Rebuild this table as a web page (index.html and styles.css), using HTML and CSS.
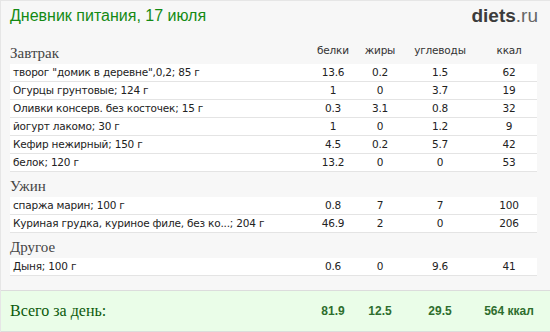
FILE: index.html
```html
<!DOCTYPE html>
<html lang="ru">
<head>
<meta charset="utf-8">
<link rel="stylesheet" href="styles.css">
</head>
<body>
<div class="page">
  <header class="top">
    <h1 class="title">Дневник питания, 17 июля</h1>
    <div class="logo"><b>diets</b>.ru</div>
  </header>

  <section class="meal">
    <div class="meal-head">
      <h2 class="meal-name">Завтрак</h2>
      <span class="c c1">белки</span><span class="c c2">жиры</span><span class="c c3">углеводы</span><span class="c c4">ккал</span>
    </div>
    <div class="row"><span class="name">творог "домик в деревне",0,2; 85 г</span><span class="c c1">13.6</span><span class="c c2">0.2</span><span class="c c3">1.5</span><span class="c c4">62</span></div>
    <div class="row"><span class="name">Огурцы грунтовые; 124 г</span><span class="c c1">1</span><span class="c c2">0</span><span class="c c3">3.7</span><span class="c c4">19</span></div>
    <div class="row"><span class="name">Оливки консерв. без косточек; 15 г</span><span class="c c1">0.3</span><span class="c c2">3.1</span><span class="c c3">0.8</span><span class="c c4">32</span></div>
    <div class="row"><span class="name">йогурт лакомо; 30 г</span><span class="c c1">1</span><span class="c c2">0</span><span class="c c3">1.2</span><span class="c c4">9</span></div>
    <div class="row"><span class="name">Кефир нежирный; 150 г</span><span class="c c1">4.5</span><span class="c c2">0.2</span><span class="c c3">5.7</span><span class="c c4">42</span></div>
    <div class="row"><span class="name">белок; 120 г</span><span class="c c1">13.2</span><span class="c c2">0</span><span class="c c3">0</span><span class="c c4">53</span></div>
  </section>

  <section class="meal">
    <div class="meal-head"><h2 class="meal-name">Ужин</h2></div>
    <div class="row"><span class="name">спаржа марин; 100 г</span><span class="c c1">0.8</span><span class="c c2">7</span><span class="c c3">7</span><span class="c c4">100</span></div>
    <div class="row"><span class="name">Куриная грудка, куриное филе, без ко...; 204 г</span><span class="c c1">46.9</span><span class="c c2">2</span><span class="c c3">0</span><span class="c c4">206</span></div>
  </section>

  <section class="meal">
    <div class="meal-head"><h2 class="meal-name">Другое</h2></div>
    <div class="row"><span class="name">Дыня; 100 г</span><span class="c c1">0.6</span><span class="c c2">0</span><span class="c c3">9.6</span><span class="c c4">41</span></div>
  </section>

  <footer class="total">
    <span class="total-label">Всего за день:</span>
    <span class="c c1">81.9</span><span class="c c2">12.5</span><span class="c c3">29.5</span><span class="c c4">564 ккал</span>
  </footer>
</div>
</body>
</html>
```
FILE: styles.css
```css
html, body {
  margin: 0;
  padding: 0;
  background: #f7f7f7;
}
.page {
  width: 550px;
  height: 332px;
  box-sizing: border-box;
  border-left: 1px solid #e6e6e6;
  border-top: 1px solid #e6e6e6;
  background: #f7f7f7;
  display: flex;
  flex-direction: column;
}
.top {
  height: 38px;
  display: flex;
  justify-content: space-between;
  align-items: flex-start;
  padding: 0 12px 0 9px;
}
.title {
  margin: 5px 0 0;
  font-family: "Liberation Sans", Arial, sans-serif;
  font-weight: normal;
  font-size: 16px;
  line-height: 20px;
  color: #148a14;
}
.logo {
  margin-top: 4px;
  font-family: "Liberation Sans", Arial, sans-serif;
  font-size: 19px;
  line-height: 22px;
  color: #666;
}
.logo b {
  color: #3c3c3c;
}
.meal {
  display: flex;
  flex-direction: column;
}
.meal-head {
  height: 25px;
  display: flex;
  align-items: flex-end;
  padding: 0 13px 0 9px;
  font-family: "DejaVu Sans", Verdana, sans-serif;
  font-size: 10.5px;
  letter-spacing: -0.2px;
  color: #333;
}
.meal-head .c {
  line-height: 21px;
  align-self: flex-start;
  padding-top: 1px;
}
.meal-name {
  flex: 1;
  margin: 0;
  font-family: "Liberation Serif", Georgia, serif;
  font-weight: normal;
  font-size: 15px;
  line-height: 22px;
  letter-spacing: 0;
  color: #444;
}
.row {
  height: 17px;
  margin: 0 13px 0 9px;
  border-bottom: 1px solid #e4e4e4;
  background: #fff;
  display: flex;
  align-items: center;
  font-family: "DejaVu Sans", Verdana, sans-serif;
  font-size: 10.5px;
  letter-spacing: -0.2px;
  color: #222;
}
.name {
  flex: 1;
  padding-left: 3px;
  white-space: nowrap;
}
.c {
  text-align: center;
  flex: none;
}
.c1 { width: 56px; }
.c2 { width: 38px; }
.c3 { width: 82px; }
.c4 { width: 56px; }
.total {
  margin-top: 14px;
  height: 41px;
  border-top: 1px solid #dcdcdc;
  border-bottom: 1px solid #dcdcdc;
  background: #eafde8;
  display: flex;
  align-items: center;
  padding: 0 13px 0 9px;
  font-family: "Liberation Sans", Arial, sans-serif;
  font-weight: bold;
  font-size: 12px;
  color: #2e6e2e;
}
.total-label {
  flex: 1;
  font-family: "Liberation Serif", Georgia, serif;
  font-weight: normal;
  font-size: 16px;
  color: #0b5a0b;
}
```
